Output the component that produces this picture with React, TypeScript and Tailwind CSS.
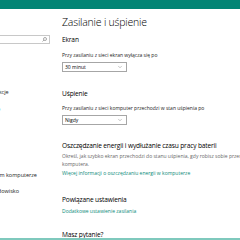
import { ChevronDown } from 'lucide-react';

const sideItems = [
  { label: 'Powiadomienia i akcje', active: false },
  { label: 'Zasilanie i uśpienie', active: true },
  { label: 'Magazyn', active: false },
  { label: 'Tryb tabletu', active: false },
  { label: 'Wielozadaniowość', active: false },
  { label: 'Wyświetlanie na tym komputerze', active: false },
  { label: 'Udostępnione środowisko', active: false },
];

function Dropdown({ value }: { value: string }) {
  return (
    <div className="flex items-center justify-between w-[65px] h-[10px] border border-[#a6a6a6] bg-white pl-[2px] pr-[3px]">
      <span className="text-[5px] leading-[8px] text-black">{value}</span>
      <ChevronDown size={6} strokeWidth={1.5} className="text-[#666]" />
    </div>
  );
}

function SearchIcon() {
  return (
    <svg width="5" height="5" viewBox="0 0 10 10" fill="none" stroke="#555" strokeWidth="1">
      <circle cx="6" cy="4" r="3" />
      <path d="M3.8 6.2 L1 9" />
    </svg>
  );
}

export default function App() {
  return (
    <div className="w-[240px] h-[240px] overflow-hidden bg-white flex flex-col font-['Open_Sans',sans-serif]">
      <div className="h-[9px] bg-[#038575] shrink-0" />
      <div className="flex flex-1 min-h-0">
        <aside className="w-[62px] shrink-0 overflow-hidden">
          <div className="-ml-[52px] w-[114px] pl-[4px] pt-[26px]">
            <div className="flex items-center justify-end w-[98px] h-[9px] border border-[#c8c8c8] pr-[2px]">
              <SearchIcon />
            </div>
            <ul className="mt-[40px]">
              {sideItems.map((item) => (
                <li
                  key={item.label}
                  className={`whitespace-nowrap text-[5.5px] leading-[16.5px] ${item.active ? 'text-[#0a8a78]' : 'text-[#222]'}`}
                >
                  {item.label}
                </li>
              ))}
            </ul>
          </div>
        </aside>

        <main className="flex-1 min-w-0 pt-[6px] text-black">
          <h1 className="text-[10.5px] leading-[14px] font-light tracking-[-0.2px] whitespace-nowrap">
            Zasilanie i uśpienie
          </h1>

          <h2 className="mt-[7px] text-[6.6px] leading-[8px] font-medium tracking-[-0.15px]">Ekran</h2>
          <p className="mt-[8px] text-[5px] leading-[7px] whitespace-nowrap text-[#222]">
            Przy zasilaniu z sieci ekran wyłącza się po
          </p>
          <div className="mt-[3px]">
            <Dropdown value="30 minut" />
          </div>

          <h2 className="mt-[18px] text-[6.6px] leading-[8px] font-medium tracking-[-0.15px]">Uśpienie</h2>
          <p className="mt-[7px] text-[5px] leading-[7px] whitespace-nowrap text-[#222]">
            Przy zasilaniu z sieci komputer przechodzi w stan uśpienia po
          </p>
          <div className="mt-[3px]">
            <Dropdown value="Nigdy" />
          </div>

          <h2 className="mt-[17px] text-[6.6px] leading-[8px] font-medium tracking-[-0.15px] whitespace-nowrap">
            Oszczędzanie energii i wydłużanie czasu pracy baterii
          </h2>
          <p className="mt-[2px] text-[5px] leading-[8px] whitespace-nowrap text-[#666]">
            Określ, jak szybko ekran przechodzi do stanu uśpienia, gdy robisz sobie przerwę od
            <br />
            komputera.
          </p>
          <a className="block mt-[2px] text-[5px] leading-[7px] whitespace-nowrap text-[#0a8a78]">
            Więcej informacji o oszczędzaniu energii w komputerze
          </a>

          <h2 className="mt-[19px] text-[6.6px] leading-[8px] font-medium tracking-[-0.15px] whitespace-nowrap">
            Powiązane ustawienia
          </h2>
          <a className="block mt-[4px] text-[5px] leading-[7px] whitespace-nowrap text-[#0a8a78]">
            Dodatkowe ustawienie zasilania
          </a>

          <h2 className="mt-[16px] text-[6.6px] leading-[8px] font-medium tracking-[-0.15px] whitespace-nowrap">
            Masz pytanie?
          </h2>
        </main>
      </div>
      <div className="h-[2px] bg-[#7fc9bd] shrink-0" />
    </div>
  );
}
